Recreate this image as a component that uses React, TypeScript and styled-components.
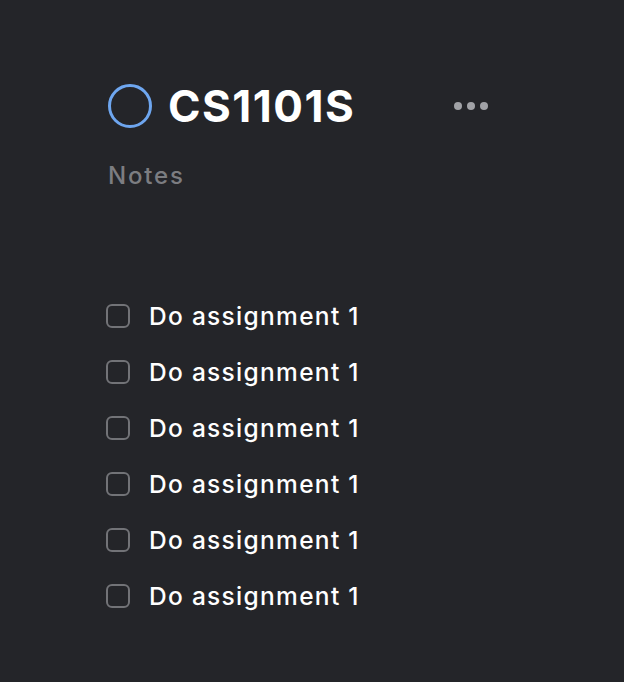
import React from "react";
import styled, { createGlobalStyle } from "styled-components";

const Global = createGlobalStyle`
  html, body { margin: 0; padding: 0; background: #242529; }
  body { font-family: Inter, "Noto Sans", sans-serif; -webkit-font-smoothing: antialiased; }
`;

const Page = styled.div`
  width: 624px;
  height: 682px;
  background: #242529;
  box-sizing: border-box;
  padding: 84px 0 0 108px;
`;

const Header = styled.div`
  display: flex;
  align-items: center;
  width: 380px;
  height: 44px;
`;

const Ring = styled.div`
  width: 44px;
  height: 44px;
  box-sizing: border-box;
  border: 3px solid #6ea6ef;
  border-radius: 50%;
  flex: none;
`;

const Title = styled.h1`
  margin: 0 0 0 16px;
  font-size: 44px;
  font-weight: 700;
  color: #ffffff;
  letter-spacing: 1.5px;
  line-height: 44px;
  flex: 1;
`;

const MoreButton = styled.div`
  display: flex;
  gap: 5px;
  align-items: center;
`;

const Dot = styled.span`
  width: 8px;
  height: 8px;
  border-radius: 50%;
  background: #a1a2a6;
`;

const Notes = styled.div`
  margin-top: 33px;
  font-size: 24px;
  font-weight: 500;
  color: #7c7d81;
  letter-spacing: 1.8px;
  line-height: 30px;
`;

const List = styled.ul`
  list-style: none;
  margin: 110px 0 0 -2px;
  padding: 0;
  display: flex;
  flex-direction: column;
  gap: 26px;
`;

const Row = styled.li`
  display: flex;
  align-items: center;
  height: 30px;
`;

const Box = styled.span`
  width: 24px;
  height: 24px;
  box-sizing: border-box;
  border: 2px solid #727377;
  border-radius: 6px;
  flex: none;
  margin-top: -1px;
`;

const Label = styled.span`
  margin-left: 19px;
  font-size: 24.5px;
  font-weight: 500;
  color: #ffffff;
  letter-spacing: 1.3px;
  line-height: 30px;
`;

export default function App() {
  const items = Array.from({ length: 6 }, () => "Do assignment 1");
  return (
    <>
      <Global />
      <Page>
        <Header>
          <Ring />
          <Title>CS1101S</Title>
          <MoreButton>
            <Dot />
            <Dot />
            <Dot />
          </MoreButton>
        </Header>
        <Notes>Notes</Notes>
        <List>
          {items.map((t, i) => (
            <Row key={i}>
              <Box />
              <Label>{t}</Label>
            </Row>
          ))}
        </List>
      </Page>
    </>
  );
}
